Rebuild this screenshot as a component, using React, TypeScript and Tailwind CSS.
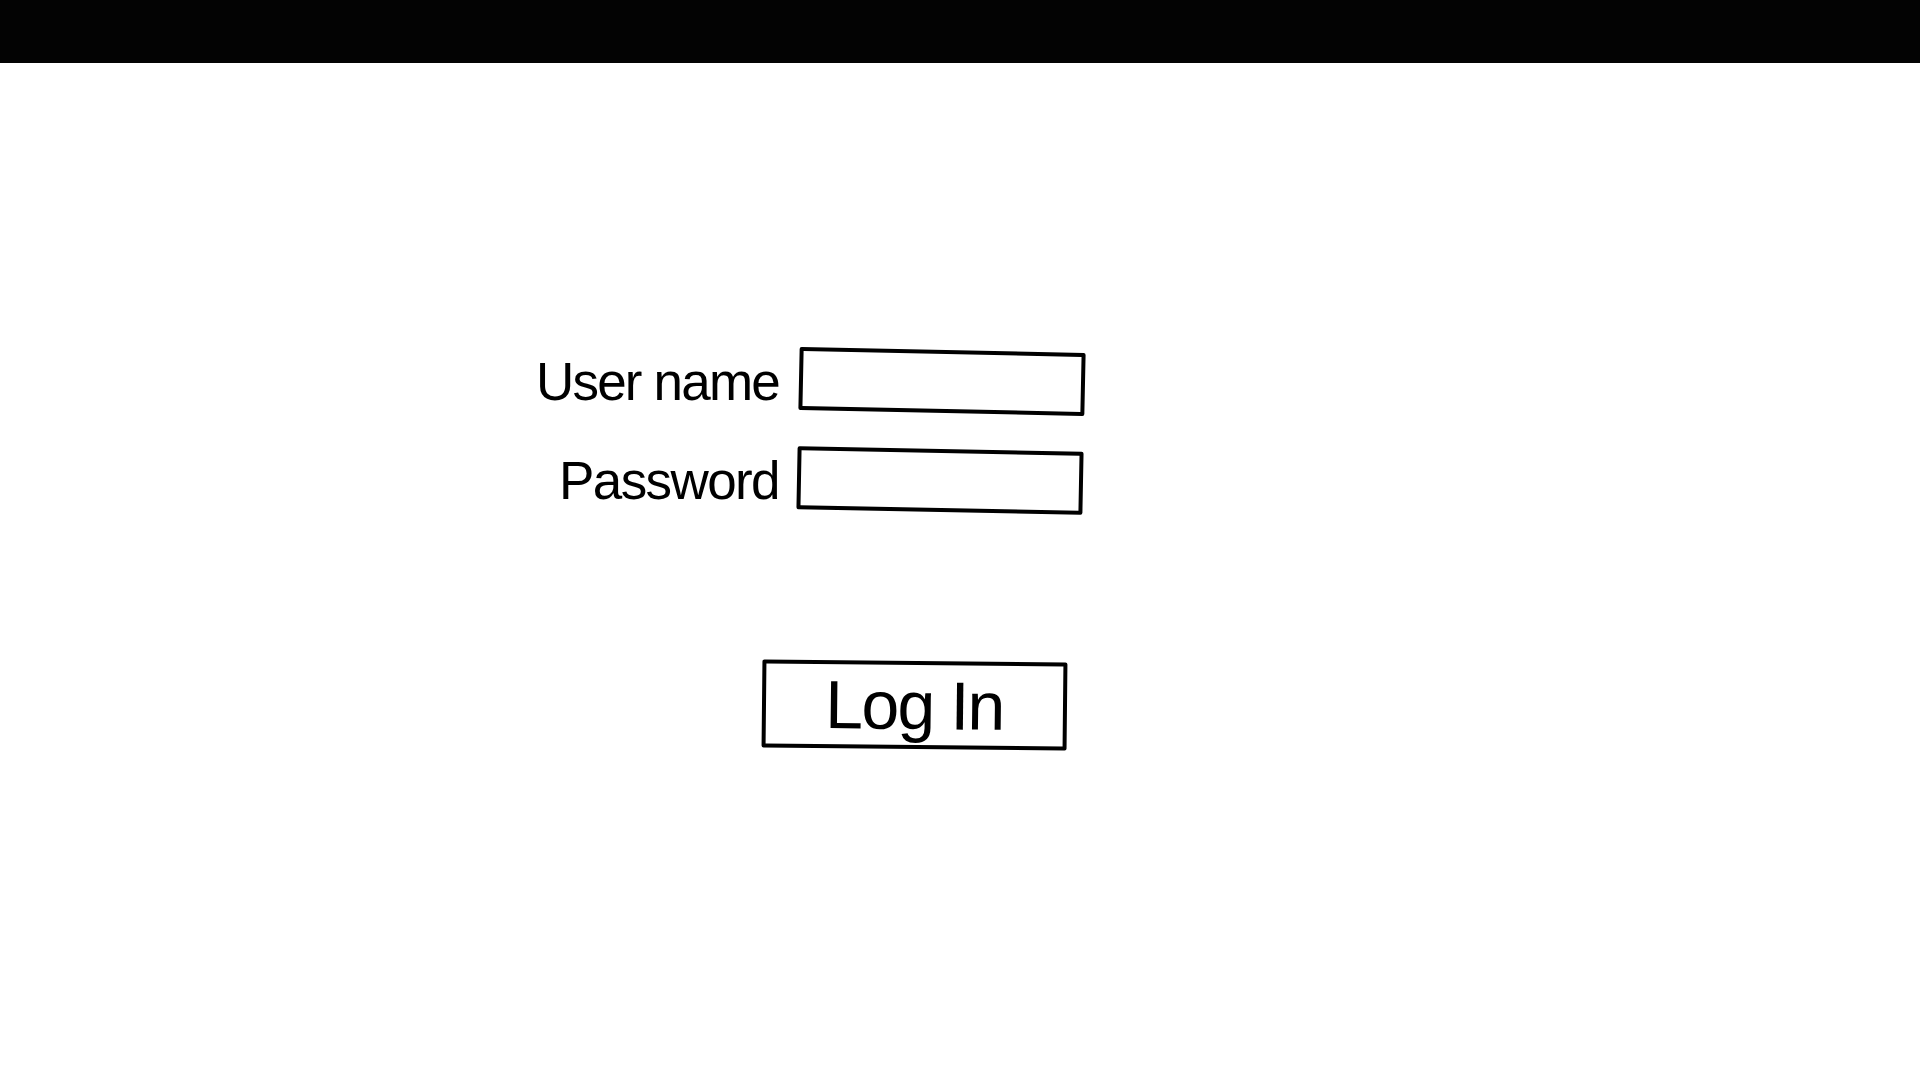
import React from "react";

export default function App() {
  const font = { fontFamily: '"Liberation Sans", Arial, sans-serif' };
  return (
    <div className="min-h-screen w-full bg-white flex flex-col" style={font}>
      <div className="h-[63px] w-full bg-[#030303]" />
      <div className="mt-[287px] grid grid-cols-[779px_286px] gap-x-[20px] gap-y-[36px] items-center">
        <label className="text-right text-[53px] leading-none tracking-[-1.8px] text-black">
          User name
        </label>
        <input
          type="text"
          aria-label="User name"
          className="h-[63px] w-[286px] border-[4px] border-black rounded-[2px] bg-white rotate-[1.2deg] outline-none"
        />
        <label className="text-right text-[53px] leading-none tracking-[-1.6px] text-black">
          Password
        </label>
        <input
          type="password"
          aria-label="Password"
          className="-ml-[2px] h-[63px] w-[286px] border-[4px] border-black rounded-[2px] bg-white rotate-[1.1deg] outline-none"
        />
      </div>
      <div className="mt-[149px] pl-[762px]">
        <button
          type="button"
          className="flex h-[88px] w-[305px] items-center justify-center border-[4px] border-black rounded-[2px] bg-white rotate-[0.6deg] text-[68px] leading-none tracking-[-1.8px] text-black"
        >
          Log In
        </button>
      </div>
    </div>
  );
}
